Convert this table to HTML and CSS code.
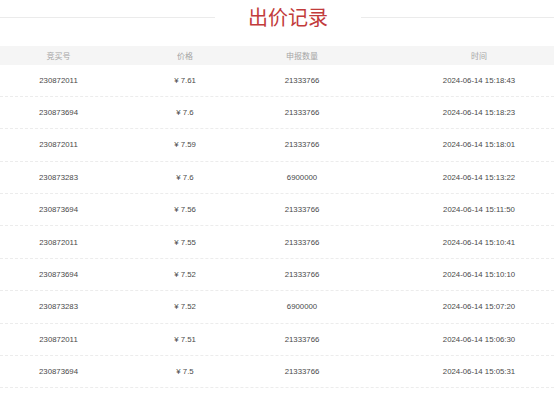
FILE: index.html
```html
<!DOCTYPE html>
<html>
<head>
<meta charset="utf-8">
<link rel="stylesheet" href="styles.css">
</head>
<body>
<div class="page">
  <div class="title-bar">
    <span class="line left"></span>
    <h1 class="title">出价记录</h1>
    <span class="line"></span>
  </div>
  <div class="table">
    <div class="row head">
      <div class="c1">竞买号</div><div class="c2">价格</div><div class="c3">申报数量</div><div class="c4">时间</div>
    </div>
    <div class="row"><div class="c1">230872011</div><div class="c2">¥ 7.61</div><div class="c3">21333766</div><div class="c4">2024-06-14 15:18:43</div></div>
    <div class="row"><div class="c1">230873694</div><div class="c2">¥ 7.6</div><div class="c3">21333766</div><div class="c4">2024-06-14 15:18:23</div></div>
    <div class="row"><div class="c1">230872011</div><div class="c2">¥ 7.59</div><div class="c3">21333766</div><div class="c4">2024-06-14 15:18:01</div></div>
    <div class="row"><div class="c1">230873283</div><div class="c2">¥ 7.6</div><div class="c3">6900000</div><div class="c4">2024-06-14 15:13:22</div></div>
    <div class="row"><div class="c1">230873694</div><div class="c2">¥ 7.56</div><div class="c3">21333766</div><div class="c4">2024-06-14 15:11:50</div></div>
    <div class="row"><div class="c1">230872011</div><div class="c2">¥ 7.55</div><div class="c3">21333766</div><div class="c4">2024-06-14 15:10:41</div></div>
    <div class="row"><div class="c1">230873694</div><div class="c2">¥ 7.52</div><div class="c3">21333766</div><div class="c4">2024-06-14 15:10:10</div></div>
    <div class="row"><div class="c1">230873283</div><div class="c2">¥ 7.52</div><div class="c3">6900000</div><div class="c4">2024-06-14 15:07:20</div></div>
    <div class="row"><div class="c1">230872011</div><div class="c2">¥ 7.51</div><div class="c3">21333766</div><div class="c4">2024-06-14 15:06:30</div></div>
    <div class="row"><div class="c1">230873694</div><div class="c2">¥ 7.5</div><div class="c3">21333766</div><div class="c4">2024-06-14 15:05:31</div></div>
  </div>
</div>
</body>
</html>
```
FILE: styles.css
```css
html, body {
  margin: 0;
  padding: 0;
  background: #fff;
}
body {
  font-family: "Liberation Sans", Arial, "Noto Sans CJK SC", sans-serif;
  width: 554px;
  overflow: hidden;
}
.title-bar {
  height: 46px;
  display: flex;
  align-items: flex-start;
}
.title-bar .line {
  flex: 1;
  height: 1px;
  background: #ebebeb;
  margin-top: 17px;
}
.title-bar .line.left {
  flex: 0 0 215px;
}
.title {
  margin: 0;
  width: 146px;
  text-align: center;
  font-size: 20px;
  line-height: 34px;
  font-weight: normal;
  color: #c23b3b;
  font-family: "Noto Sans CJK SC", sans-serif;
}
.row {
  display: grid;
  grid-template-columns: 117px 136px 98px 1fr;
  height: 32.4px;
  box-sizing: border-box;
  border-bottom: 1px dashed #ececec;
  align-items: center;
  font-size: 7.8px;
  color: #4a4a4a;
  text-align: center;
}
.row .c4 {
  padding-left: 53px;
}
.row.head {
  height: 18.5px;
  background: #f5f5f5;
  border-bottom: none;
  color: #a5a5a5;
  font-size: 8px;
  font-family: "Noto Sans CJK SC", sans-serif;
}
```
